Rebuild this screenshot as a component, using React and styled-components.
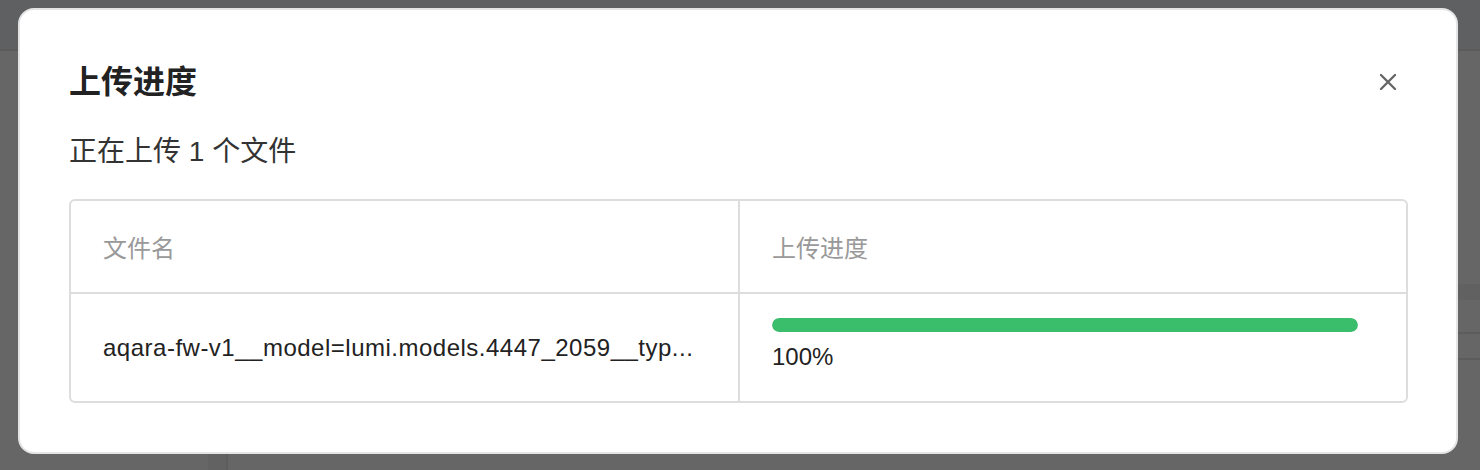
import React from "react";
import styled, { createGlobalStyle } from "styled-components";

const GlobalStyle = createGlobalStyle`
  html, body {
    margin: 0;
    padding: 0;
    background: #666666;
    font-family: "Liberation Sans", "Noto Sans CJK SC", sans-serif;
  }
`;

const Page = styled.div`
  position: relative;
  width: 1480px;
  height: 470px;
  overflow: hidden;
  display: flex;
  flex-direction: column;
  background: #666666;
`;

const TopBar = styled.div`
  height: 49px;
  flex-shrink: 0;
  background: #5f6062;
  border-bottom: 2px solid #5b5b5b;
`;

const Body = styled.div`
  flex: 1;
  display: flex;
`;

const Sidebar = styled.div`
  width: 228px;
  display: flex;
  justify-content: flex-end;
  border-right: 2px solid #5d5d5d;
  box-sizing: border-box;
`;

const ScrollTrack = styled.div`
  width: 18px;
  background: #626262;
`;

const Main = styled.div`
  flex: 1;
  padding-top: 233px;
  display: flex;
  flex-direction: column;
`;

const BgRow = styled.div`
  height: ${(p) => p.h}px;
  background: ${(p) => (p.shade ? "#616161" : "transparent")};
  border-bottom: ${(p) => (p.line ? "2px solid #5c5c5c" : "none")};
`;

const Modal = styled.div`
  position: absolute;
  left: 18px;
  top: 8px;
  width: 1440px;
  height: 446px;
  box-sizing: border-box;
  background: #ffffff;
  border: 2px solid #e4e4e4;
  border-radius: 16px;
  padding: 50px 49px 0 49px;
`;

const Header = styled.div`
  display: flex;
  align-items: center;
  justify-content: space-between;
  height: 44px;
`;

const Title = styled.h2`
  margin: 0;
  font-size: 32px;
  font-weight: 700;
  color: #222222;
  line-height: 44px;
`;

const CloseButton = styled.button`
  border: none;
  background: none;
  padding: 0;
  margin-right: 7px;
  width: 24px;
  height: 24px;
  display: flex;
  align-items: center;
  justify-content: center;
  cursor: pointer;
`;

const Subtitle = styled.p`
  margin: 28px 0 27px 0;
  font-size: 28px;
  line-height: 40px;
  color: #333333;
`;

const Table = styled.div`
  width: 1339px;
  box-sizing: border-box;
  border: 2px solid #dddddd;
  border-radius: 6px;
  display: grid;
  grid-template-columns: 669px 1fr;
`;

const HeadCell = styled.div`
  height: 93px;
  box-sizing: border-box;
  padding: 0 32px;
  display: flex;
  align-items: center;
  font-size: 24px;
  color: #999999;
  border-bottom: 2px solid #dddddd;
  border-right: ${(p) => (p.divider ? "2px solid #dddddd" : "none")};
`;

const Cell = styled.div`
  min-height: 107px;
  box-sizing: border-box;
  padding: ${(p) => (p.progress ? "24px 48px 0 32px" : "0 32px")};
  display: flex;
  flex-direction: column;
  justify-content: ${(p) => (p.progress ? "flex-start" : "center")};
  border-right: ${(p) => (p.divider ? "2px solid #dddddd" : "none")};
  min-width: 0;
`;

const FileName = styled.div`
  font-size: 24px;
  letter-spacing: 0.5px;
  color: #222222;
  white-space: nowrap;
  overflow: hidden;
  text-overflow: ellipsis;
`;

const Track = styled.div`
  height: 14px;
  border-radius: 7px;
  background: #e9e9e9;
  overflow: hidden;
`;

const Fill = styled.div`
  height: 100%;
  border-radius: 7px;
  background: #3bbe6c;
`;

const Percent = styled.div`
  margin-top: 10px;
  font-size: 24px;
  line-height: 30px;
  color: #222222;
`;

const files = [
  {
    name: "aqara-fw-v1__model=lumi.models.4447_2059__typ...",
    progress: 100,
  },
];

const App = () => {
  return (
    <Page>
      <GlobalStyle />
      <TopBar />
      <Body>
        <Sidebar>
          <ScrollTrack />
        </Sidebar>
        <Main>
          <BgRow h={16} shade />
          <BgRow h={32} line />
          <BgRow h={24} line />
        </Main>
      </Body>

      <Modal>
        <Header>
          <Title>上传进度</Title>
          <CloseButton aria-label="关闭">
            <svg width="18" height="18" viewBox="0 0 18 18">
              <path
                d="M2 2 L16 16 M16 2 L2 16"
                stroke="#666666"
                strokeWidth="2.4"
                strokeLinecap="round"
              />
            </svg>
          </CloseButton>
        </Header>
        <Subtitle>正在上传 1 个文件</Subtitle>
        <Table>
          <HeadCell divider>文件名</HeadCell>
          <HeadCell>上传进度</HeadCell>
          {files.map((f) => (
            <React.Fragment key={f.name}>
              <Cell divider>
                <FileName>{f.name}</FileName>
              </Cell>
              <Cell progress>
                <Track>
                  <Fill style={{ width: `${f.progress}%` }} />
                </Track>
                <Percent>{f.progress}%</Percent>
              </Cell>
            </React.Fragment>
          ))}
        </Table>
      </Modal>
    </Page>
  );
};

export default App;
